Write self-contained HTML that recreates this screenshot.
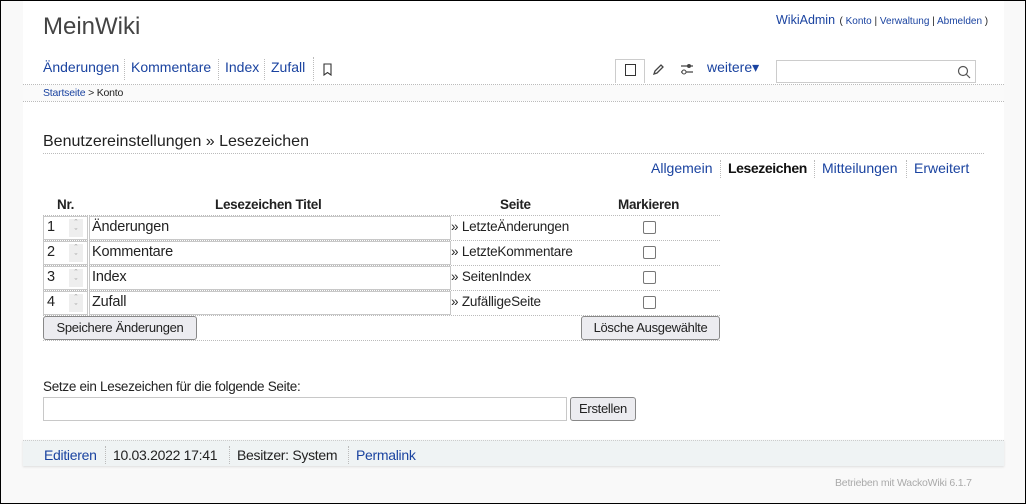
<!DOCTYPE html>
<html><head><meta charset="utf-8"><style>
*{box-sizing:border-box;margin:0;padding:0}
body{width:1026px;height:504px;overflow:hidden;background:#f9f9f9;font-family:"Liberation Sans",sans-serif;color:#222;position:relative}
.frame{position:absolute;left:0;top:0;width:1026px;height:504px;border:1px solid #000;pointer-events:none;z-index:10}
.page{position:absolute;left:23px;top:1px;width:981px;height:439px;background:#fff}
.a{position:absolute;white-space:nowrap}
a,.l{color:#1a43a0;text-decoration:none}
.n{font-family:"Liberation Sans",sans-serif;letter-spacing:-0.3px}
.sep{position:absolute;border-left:1px dotted #bbb}
.hr{position:absolute;border-top:1px dotted #bbb}
.inp{position:absolute;border:1px solid #c8c8c8;background:#fff;height:24px}
.btn{position:absolute;border:1px solid #888;border-radius:3px;background:#ececf0;font-size:13px;letter-spacing:-0.3px;text-align:center;line-height:22px;color:#222}
.cb{position:absolute;width:13px;height:13px;border:1px solid #777;border-radius:2px;background:#fff}
.rowt{font-size:14.5px;color:#222;letter-spacing:-0.2px}
.sp{position:absolute;width:14px;height:18px;background:#eee;color:#999;font-size:9px;text-align:center;line-height:9px}
</style></head><body>
<div class="frame"></div>
<div class="page"></div>
<div class="a" style="left:43px;top:13px;font-size:24px;color:#444">MeinWiki</div>
<div class="a" style="left:776px;top:11px"><span class="l" style="font-size:12.5px">WikiAdmin</span> <span style="font-size:10px">( <a>Konto</a> | <a>Verwaltung</a> | <a>Abmelden</a> )</span></div>
<div class="a" style="left:43px;top:59px;font-size:14px"><a>Änderungen</a></div>
<div class="sep" style="left:124px;top:59px;height:21px"></div>
<div class="a" style="left:131px;top:59px;font-size:14px"><a>Kommentare</a></div>
<div class="sep" style="left:218px;top:59px;height:21px"></div>
<div class="a" style="left:225px;top:59px;font-size:14px"><a>Index</a></div>
<div class="sep" style="left:264px;top:59px;height:21px"></div>
<div class="a" style="left:271px;top:59px;font-size:14px"><a>Zufall</a></div>
<div class="sep" style="left:313px;top:57px;height:24px"></div>
<svg class="a" style="left:323px;top:63px" width="10" height="13"><path d="M1 1h7v11l-3.5-2.5-3.5 2.5z" fill="none" stroke="#333" stroke-width="1.1"/></svg>
<div class="a" style="left:615px;top:59px;width:30px;height:24px;border:1px solid #ccc;border-bottom:none;background:#fff"></div>
<div class="a" style="left:625px;top:64px;width:11px;height:12px;border:1.3px solid #333"></div>
<svg class="a" style="left:652px;top:63px" width="12" height="13"><path d="M2 11l1-3 6-6 2 2-6 6z" fill="none" stroke="#444" stroke-width="1.3"/></svg>
<svg class="a" style="left:680px;top:62px" width="14" height="14"><path d="M1 4h12M1 10h12" stroke="#444" stroke-width="1.2"/><circle cx="9" cy="4" r="2" fill="#444"/><circle cx="4" cy="10" r="2" fill="#fff" stroke="#444"/></svg>
<div class="a" style="left:707px;top:59px;font-size:14px"><a>weitere▾</a></div>
<div class="a" style="left:776px;top:60px;width:200px;height:23px;border:1px solid #ccc;background:#fff"></div>
<svg class="a" style="left:957px;top:65px" width="14" height="14"><circle cx="6" cy="6" r="4.5" fill="none" stroke="#555" stroke-width="1.2"/><path d="M9.5 9.5l3.5 3.5" stroke="#555" stroke-width="1.2"/></svg>
<div class="hr" style="left:23px;top:84px;width:981px"></div>
<div class="a" style="left:23px;top:85px;width:981px;height:16px;background:#fafafa"></div>
<div class="a" style="left:43px;top:87px;font-size:10.5px;letter-spacing:-0.2px"><a>Startseite</a> &gt; Konto</div>
<div class="hr" style="left:23px;top:101px;width:981px"></div>
<div class="a" style="left:43px;top:133px;font-size:16px;color:#222">Benutzereinstellungen » Lesezeichen</div>
<div class="hr" style="left:43px;top:153px;width:941px"></div>
<div class="a" style="left:651px;top:160px;font-size:14px"><a>Allgemein</a></div>
<div class="sep" style="left:720px;top:160px;height:18px"></div>
<div class="a" style="left:728px;top:160px;font-size:14px;font-weight:bold;color:#111;letter-spacing:-0.4px">Lesezeichen</div>
<div class="sep" style="left:814px;top:160px;height:18px"></div>
<div class="a" style="left:822px;top:160px;font-size:14px"><a>Mitteilungen</a></div>
<div class="sep" style="left:906px;top:160px;height:18px"></div>
<div class="a" style="left:914px;top:160px;font-size:14px"><a>Erweitert</a></div>

<div class="a n" style="left:57px;top:197px;font-size:13.5px;font-weight:bold">Nr.</div>
<div class="a n" style="left:215px;top:197px;font-size:13.5px;font-weight:bold">Lesezeichen Titel</div>
<div class="a n" style="left:500px;top:197px;font-size:13.5px;font-weight:bold">Seite</div>
<div class="a n" style="left:618px;top:197px;font-size:13.5px;font-weight:bold">Markieren</div>

<div class="hr" style="left:43px;top:215px;width:677px"></div>
<div class="inp" style="left:43px;top:216px;width:45px"></div><div class="a rowt" style="left:47px;top:219px">1</div><div class="sp" style="left:69px;top:219px">ˆ<br>ˇ</div>
<div class="inp" style="left:89px;top:216px;width:362px"></div><div class="a rowt" style="left:92px;top:219px">Änderungen</div>
<div class="a rowt" style="left:451px;top:219px;font-size:13.5px">» LetzteÄnderungen</div><div class="cb" style="left:643px;top:221px"></div>
<div class="hr" style="left:43px;top:240px;width:677px"></div>

<div class="inp" style="left:43px;top:241px;width:45px"></div><div class="a rowt" style="left:47px;top:244px">2</div><div class="sp" style="left:69px;top:244px">ˆ<br>ˇ</div>
<div class="inp" style="left:89px;top:241px;width:362px"></div><div class="a rowt" style="left:92px;top:244px">Kommentare</div>
<div class="a rowt" style="left:451px;top:244px;font-size:13.5px">» LetzteKommentare</div><div class="cb" style="left:643px;top:246px"></div>
<div class="hr" style="left:43px;top:265px;width:677px"></div>

<div class="inp" style="left:43px;top:266px;width:45px"></div><div class="a rowt" style="left:47px;top:269px">3</div><div class="sp" style="left:69px;top:269px">ˆ<br>ˇ</div>
<div class="inp" style="left:89px;top:266px;width:362px"></div><div class="a rowt" style="left:92px;top:269px">Index</div>
<div class="a rowt" style="left:451px;top:269px;font-size:13.5px">» SeitenIndex</div><div class="cb" style="left:643px;top:271px"></div>
<div class="hr" style="left:43px;top:290px;width:677px"></div>

<div class="inp" style="left:43px;top:291px;width:45px"></div><div class="a rowt" style="left:47px;top:294px">4</div><div class="sp" style="left:69px;top:294px">ˆ<br>ˇ</div>
<div class="inp" style="left:89px;top:291px;width:362px"></div><div class="a rowt" style="left:92px;top:294px">Zufall</div>
<div class="a rowt" style="left:451px;top:294px;font-size:13.5px">» ZufälligeSeite</div><div class="cb" style="left:643px;top:296px"></div>
<div class="hr" style="left:43px;top:315px;width:677px"></div>

<div class="btn" style="left:43px;top:316px;width:154px;height:24px">Speichere Änderungen</div>
<div class="btn" style="left:581px;top:316px;width:139px;height:24px">Lösche Ausgewählte</div>
<div class="hr" style="left:43px;top:340px;width:677px"></div>

<div class="a n" style="left:43px;top:379px;font-size:13.5px">Setze ein Lesezeichen für die folgende Seite:</div>
<div class="a" style="left:43px;top:397px;width:524px;height:24px;border:1px solid #c8c8c8;background:#fff"></div>
<div class="btn" style="left:570px;top:397px;width:66px;height:24px">Erstellen</div>

<div class="a" style="left:23px;top:440px;width:981px;height:26px;background:#eff3f4;border-top:1px dotted #ccc;box-shadow:0 1px 2px #ddd"></div>
<div class="a n" style="left:44px;top:447px;font-size:14px"><a>Editieren</a></div>
<div class="sep" style="left:105px;top:446px;height:18px"></div>
<div class="a n" style="left:113px;top:447px;font-size:14px">10.03.2022 17:41</div>
<div class="sep" style="left:229px;top:446px;height:18px"></div>
<div class="a n" style="left:237px;top:447px;font-size:14px">Besitzer: System</div>
<div class="sep" style="left:348px;top:446px;height:18px"></div>
<div class="a n" style="left:356px;top:447px;font-size:14px"><a>Permalink</a></div>
<div class="a" style="left:835px;top:477px;font-size:10.5px;color:#aaa;letter-spacing:-0.2px">Betrieben mit WackoWiki 6.1.7</div>
</body></html>
